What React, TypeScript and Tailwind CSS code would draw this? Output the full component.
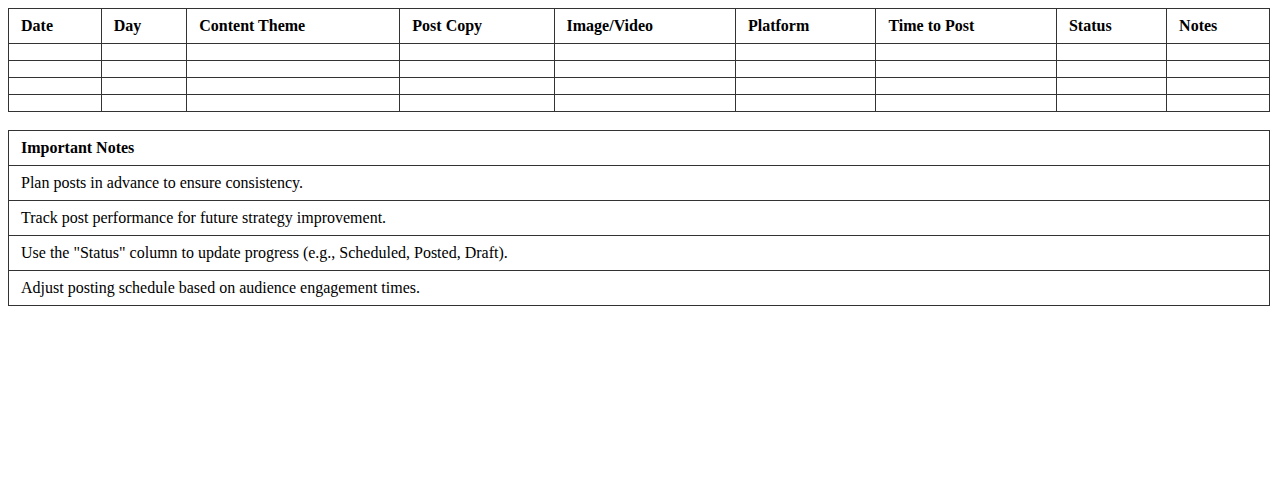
const headers = [
  "Date",
  "Day",
  "Content Theme",
  "Post Copy",
  "Image/Video",
  "Platform",
  "Time to Post",
  "Status",
  "Notes",
];

const notes = [
  "Plan posts in advance to ensure consistency.",
  "Track post performance for future strategy improvement.",
  'Use the "Status" column to update progress (e.g., Scheduled, Posted, Draft).',
  "Adjust posting schedule based on audience engagement times.",
];

export default function App() {
  return (
    <div className="bg-white p-2 text-black text-base font-['Liberation_Serif',serif]">
      {/* Calendar grid */}
      <table className="w-full border-collapse border border-[#333]">
        <thead>
          <tr>
            {headers.map((h) => (
              <th
                key={h}
                className="border border-[#333] px-3 py-2 text-left font-bold leading-[18px]"
              >
                {h}
              </th>
            ))}
          </tr>
        </thead>
        <tbody>
          {[0, 1, 2, 3].map((r) => (
            <tr key={r}>
              {headers.map((h) => (
                <td key={h} className="border border-[#333] px-3 py-2"></td>
              ))}
            </tr>
          ))}
        </tbody>
      </table>

      {/* Notes */}
      <table className="mt-[18px] w-full border-collapse border border-[#333]">
        <thead>
          <tr>
            <th className="border border-[#333] px-3 py-2 text-left font-bold leading-[18px]">
              Important Notes
            </th>
          </tr>
        </thead>
        <tbody>
          {notes.map((n) => (
            <tr key={n}>
              <td className="border border-[#333] px-3 py-2 leading-[18px]">{n}</td>
            </tr>
          ))}
        </tbody>
      </table>
    </div>
  );
}
